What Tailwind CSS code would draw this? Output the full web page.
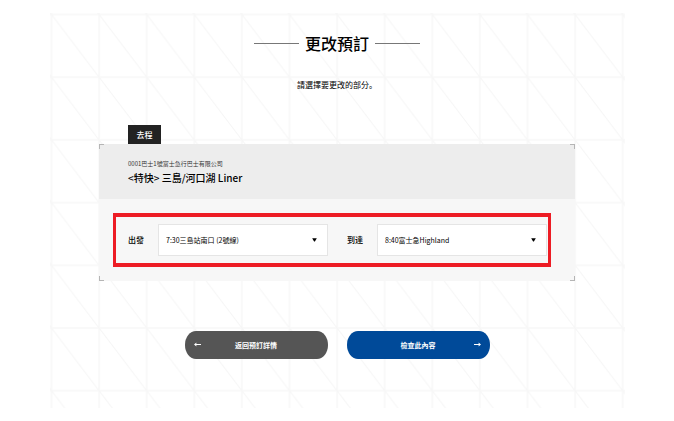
<!DOCTYPE html>
<html lang="zh">
<head>
<meta charset="utf-8">
<meta name="viewport" content="width=device-width, initial-scale=1">
<title>更改預訂</title>
<script src="https://cdn.jsdelivr.net/npm/@tailwindcss/browser@4"></script>
</head>
<body class="bg-white px-[49px] pt-[13px] font-['Noto_Sans_CJK_JP',sans-serif] text-black">
<main class="relative isolate pt-4 pb-[49px]">
  <svg class="absolute inset-0 -z-10 h-full w-full" aria-hidden="true">
    <defs>
      <pattern id="grid" x="2.5" y="1.5" width="47.6" height="62.7" patternUnits="userSpaceOnUse">
        <path d="M0 0H47.6M0 62.7H47.6M0 0V62.7M47.6 0V62.7" fill="none" stroke="#f8f8f8" stroke-width="1.6"/>
        <path d="M0 0L47.6 62.7" fill="none" stroke="#f5f5f5" stroke-width="1"/>
      </pattern>
    </defs>
    <rect x="1" y="0" width="100%" height="100%" fill="url(#grid)"/>
  </svg>

  <header class="flex flex-col items-center">
    <div class="flex items-center gap-1.5">
      <span class="h-px w-[45px] bg-[#777]"></span>
      <h1 class="text-[16px] leading-7 font-medium">更改預訂</h1>
      <span class="h-px w-[45px] bg-[#777]"></span>
    </div>
    <p class="mt-[22px] text-[8px] leading-3">請選擇要更改的部分。</p>
  </header>

  <section class="mx-[50px] mt-[34px]">
    <h2 class="ml-[29px] flex h-[19px] w-[33px] items-center justify-center bg-[#222] text-[8px] font-medium text-white">去程</h2>
    <div class="relative bg-[#f7f7f7] pb-[14px]">
      <span class="absolute top-0 left-0 size-[5px] border-t border-l border-[#b5b5b5]"></span>
      <span class="absolute top-0 right-0 size-[5px] border-t border-r border-[#b5b5b5]"></span>
      <span class="absolute bottom-0 left-0 size-[5px] border-b border-l border-[#b5b5b5]"></span>
      <span class="absolute right-0 bottom-0 size-[5px] border-r border-b border-[#b5b5b5]"></span>
      <div class="bg-[#ededed] px-[29px] pt-[14px] pb-[13px]">
        <p class="text-[6px] leading-3 text-[#333]">0001巴士1號富士急行巴士有限公司</p>
        <h3 class="text-[10px] leading-4 font-medium">&lt;特快&gt; 三島/河口湖 Liner</h3>
      </div>
      <form class="mt-[14px] mr-6 ml-[14px] flex items-center border-x-[3px] border-y-4 border-[#ed1c24] py-[7px] pr-px pl-3">
        <label for="departure" class="w-[30px] text-[8px] font-medium">出發</label>
        <div class="relative flex-1">
          <select id="departure" class="block h-8 w-full appearance-none border border-[#e5e5e5] bg-white pl-[7px] text-[7px]">
            <option>7:30三島站南口 (2號線)</option>
          </select>
          <svg class="pointer-events-none absolute top-[14px] right-[11px] h-1 w-[5px]" viewBox="0 0 5 4" aria-hidden="true"><path d="M0.2 .3H4.8L2.9 3.6H2.1Z"/></svg>
        </div>
        <label for="arrival" class="ml-[19px] w-[30px] text-[8px] font-medium">到達</label>
        <div class="relative flex-1">
          <select id="arrival" class="block h-8 w-full appearance-none border border-[#e5e5e5] bg-white pl-[7px] text-[7px]">
            <option>8:40富士急Highland</option>
          </select>
          <svg class="pointer-events-none absolute top-[14px] right-[11px] h-1 w-[5px]" viewBox="0 0 5 4" aria-hidden="true"><path d="M0.2 .3H4.8L2.9 3.6H2.1Z"/></svg>
        </div>
      </form>
    </div>
  </section>

  <div class="mt-[50px] flex justify-center gap-[19px]">
    <button type="button" class="relative h-7 w-[143px] rounded-[11px/14px] bg-[#555] text-[7px] font-bold text-white">
      <svg class="absolute top-[11px] left-[9px] h-[5px] w-[7px]" viewBox="0 0 7 5" aria-hidden="true"><path d="M0 2.5L2.4 .5V4.5Z" fill="currentColor"/><path d="M2 2.5H7" stroke="currentColor"/></svg>
      返回預訂詳情
    </button>
    <button type="button" class="relative h-7 w-[143px] rounded-[11px/14px] bg-[#004a99] text-[7px] font-bold text-white">
      檢查此內容
      <svg class="absolute top-[11px] right-[9px] h-[5px] w-[7px]" viewBox="0 0 7 5" aria-hidden="true"><path d="M7 2.5L4.6 .5V4.5Z" fill="currentColor"/><path d="M0 2.5H5" stroke="currentColor"/></svg>
    </button>
  </div>
</main>
</body>
</html>
